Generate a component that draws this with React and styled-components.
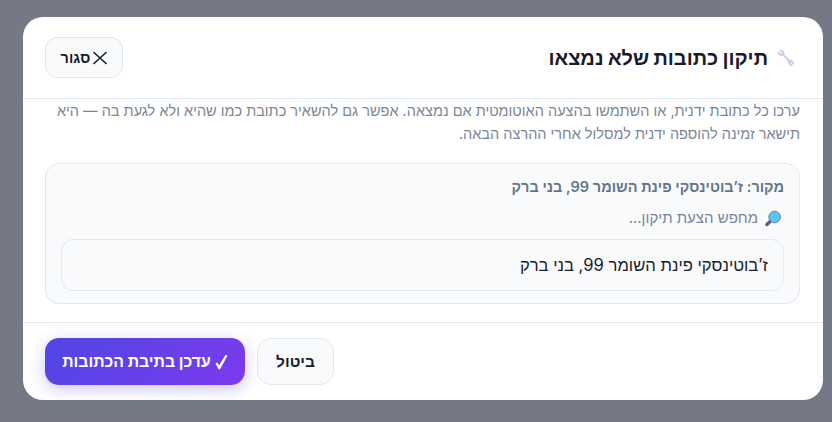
import React from 'react'
import styled, { createGlobalStyle } from 'styled-components'

const GlobalStyle = createGlobalStyle`
  * { box-sizing: border-box; }
  html, body { margin: 0; height: 100%; }
  body {
    background: #747985;
    font-family: Inter, "Noto Sans", "Liberation Sans", sans-serif;
    overflow: hidden;
  }
`

const Overlay = styled.div`
  height: 422px;
  padding: 17px 9px 22px 23px;
`

const Modal = styled.div`
  width: 800px;
  height: 383px;
  background: #fff;
  border-radius: 20px;
  direction: rtl;
  display: flex;
  flex-direction: column;
`

const Header = styled.div`
  height: 82px;
  padding: 20px 22px 20px;
  display: flex;
  align-items: center;
  justify-content: space-between;
  border-bottom: 1px solid #e2e8f0;
`

const Title = styled.h2`
  margin: 0;
  padding-right: 6px;
  display: flex;
  align-items: center;
  gap: 9px;
  font-size: 20px;
  font-weight: 800;
  color: #1a1a2e;
`

const Button = styled.button`
  font-family: inherit;
  border-radius: 12px;
  border: 1px solid #e2e8f0;
  background: #f8fafc;
  color: #1a1a2e;
  font-weight: 600;
  cursor: pointer;
`

const CloseButton = styled(Button)`
  width: 78px;
  height: 41px;
  font-size: 14.5px;
  display: flex;
  align-items: center;
  justify-content: center;
  gap: 3px;
`

const Body = styled.div`
  flex: 1;
  padding: 0 23px 0 22px;
`

const Intro = styled.p`
  margin: 0 0 18px;
  font-size: 14.5px;
  line-height: 23.2px;
  color: #7a8599;
`

const Card = styled.div`
  height: 141px;
  padding: 11px 15px;
  background: #f8fafc;
  border: 1px solid #e2e8f0;
  border-radius: 14px;
`

const Source = styled.div`
  font-size: 14.5px;
  line-height: 24px;
  font-weight: 600;
  color: #64748b;
  margin-bottom: 7px;
`

const Searching = styled.div`
  display: flex;
  align-items: center;
  gap: 7px;
  font-size: 15px;
  line-height: 24px;
  color: #7a8599;
  margin-bottom: 9px;
`

const AddressInput = styled.input`
  display: block;
  width: 100%;
  height: 52px;
  padding: 0 15px;
  font-family: inherit;
  font-size: 16.6px;
  color: #1a1a2e;
  direction: rtl;
  background: #f8fafc;
  border: 1px solid #e2e8f0;
  border-radius: 12px;
  outline: none;
`

const Footer = styled.div`
  height: 78px;
  padding: 15px 22px;
  display: flex;
  align-items: flex-start;
  justify-content: flex-end;
  gap: 12px;
  border-top: 1px solid #e2e8f0;
`

const CancelButton = styled(Button)`
  width: 77px;
  height: 47px;
  font-size: 15.5px;
  border-radius: 14px;
`

const SaveButton = styled.button`
  width: 200px;
  height: 47px;
  display: flex;
  align-items: center;
  justify-content: center;
  gap: 4px;
  font-family: inherit;
  font-size: 15.8px;
  font-weight: 700;
  color: #fff;
  border: 0;
  border-radius: 14px;
  background: linear-gradient(135deg, #4f46e5, #7c3aed);
  box-shadow: 0 4px 16px rgba(79, 70, 229, 0.3);
  cursor: pointer;
`

const WrenchIcon = () => (
  <svg width="18" height="18" viewBox="0 0 20 20">
    <path d="M3 1.5 L6 4.5 L4.5 6 L1.5 3 C1 6 3.5 8 6.5 7 L13 14 C12.2 17 14.5 19 17.5 18.5 L14.8 15.8 L16 14.5 L18.6 17 C19 14 16.5 11.8 13.8 12.6 L7.6 5.8 C8.2 3 6 1 3 1.5 Z" fill="#d3c9e8" stroke="#d3c9e8" strokeWidth="1" strokeLinejoin="round" />
  </svg>
)

const SearchIcon = () => (
  <svg width="19" height="17" viewBox="0 0 19 17">
    <path d="M5.5 11 L2 14.5" fill="none" stroke="#7d4a8f" strokeWidth="3.4" strokeLinecap="round" />
    <circle cx="9.6" cy="7" r="5.8" fill="#5cc6ee" stroke="#5f86ab" strokeWidth="1" />
  </svg>
)

const XIcon = () => (
  <svg width="14" height="14" viewBox="0 0 14 14" fill="none" stroke="#1a1a2e" strokeWidth="1.6" strokeLinecap="round">
    <path d="M1 1.5 L13 12.5 M13 1.5 L1 12.5" />
  </svg>
)

const CheckIcon = () => (
  <svg width="13" height="16" viewBox="0 0 13 16">
    <path d="M0.5 9.5 L2.2 8.4 L4.2 11.2 L10.6 0.8 L12.6 1.4 L5 15.2 L3.6 15.2 Z" fill="#fff" />
  </svg>
)

export default function App() {
  return (
    <>
      <GlobalStyle />
      <Overlay>
        <Modal>
          <Header>
            <Title>
              <WrenchIcon />
              תיקון כתובות שלא נמצאו
            </Title>
            <CloseButton>
              <XIcon />
              סגור
            </CloseButton>
          </Header>
          <Body>
            <Intro>
              ערכו כל כתובת ידנית, או השתמשו בהצעה האוטומטית אם נמצאה. אפשר גם להשאיר כתובת כמו שהיא ולא לגעת בה — היא תישאר זמינה להוספה ידנית למסלול אחרי ההרצה הבאה.
            </Intro>
            <Card>
              <Source>מקור: ז’בוטינסקי פינת השומר 99, בני ברק</Source>
              <Searching>
                <SearchIcon />
                מחפש הצעת תיקון...
              </Searching>
              <AddressInput defaultValue="ז’בוטינסקי פינת השומר 99, בני ברק" />
            </Card>
          </Body>
          <Footer>
            <CancelButton>ביטול</CancelButton>
            <SaveButton><CheckIcon />עדכן בתיבת הכתובות</SaveButton>
          </Footer>
        </Modal>
      </Overlay>
    </>
  )
}
